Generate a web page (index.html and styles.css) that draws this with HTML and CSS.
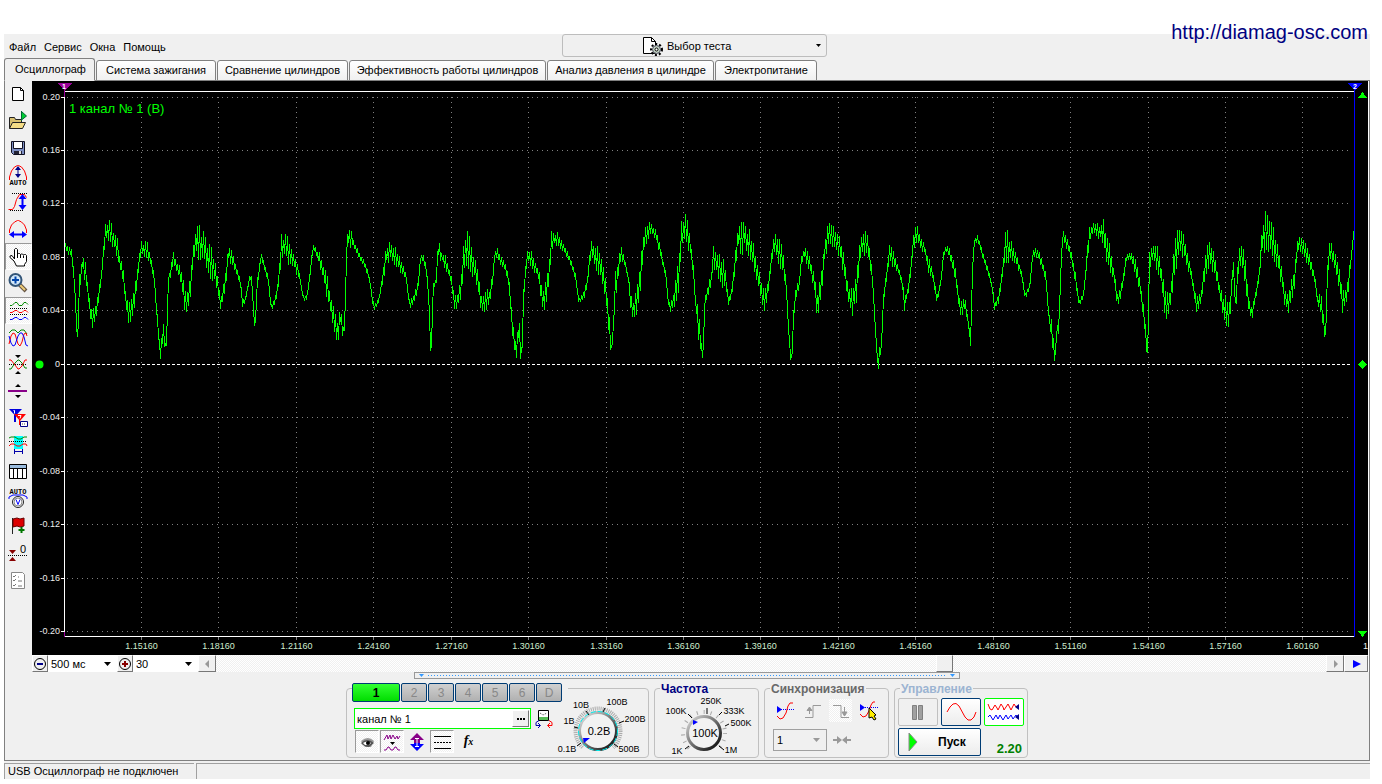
FILE: index.html
```html
<!DOCTYPE html>
<html lang="ru">
<head>
<meta charset="utf-8">
<title>USB Осциллограф</title>
<link rel="stylesheet" href="styles.css">
</head>
<body>
<a class="site" href="http://diamag-osc.com">http://diamag-osc.com</a>
<div class="window">
  <header class="topbar">
    <nav class="menu">
      <button>Файл</button><button>Сервис</button><button>Окна</button><button>Помощь</button>
    </nav>
    <button class="test-picker">
      <svg class="picker-icon" viewBox="0 0 20 20"><path d="M.5 1.500h8l4 4v12h-12z" fill="#fff" stroke="#000"/><path d="M8.500 1.500v4h4" fill="none" stroke="#000"/><circle cx="13.500" cy="13.500" r="5.500" fill="none" stroke="#000" stroke-width="2" stroke-dasharray="2 2"/><circle cx="13.500" cy="13.500" r="4" fill="#c4d4c4" stroke="#445" /><circle cx="13.500" cy="13.500" r="1.500" fill="#fff" stroke="#000"/></svg>
      <span>Выбор теста</span>
      <svg class="caret" viewBox="0 0 5 3"><path d="M0 0h5L2.500 3z"/></svg>
    </button>
  </header>
  <div class="tabs" role="tablist">
    <button class="tab active" role="tab">Осциллограф</button>
    <button class="tab" role="tab">Система зажигания</button>
    <button class="tab" role="tab">Сравнение цилиндров</button>
    <button class="tab" role="tab">Эффективность работы цилиндров</button>
    <button class="tab" role="tab">Анализ давления в цилиндре</button>
    <button class="tab" role="tab">Электропитание</button>
  </div>
  <main class="main">
    <div class="work">
      <div class="toolbar">
        <button class="tool" aria-label="Новый"><svg viewBox="0 0 21 21"><path d="M4.500 3.500h8l3 3v10h-11z" fill="#fff" stroke="#000"/><path d="M12.500 3.500v3h3" fill="none" stroke="#000"/></svg></button>
        <button class="tool" aria-label="Открыть"><svg viewBox="0 0 21 21"><path d="M1.500 17.500v-11h5l1 2h6v3" fill="#d8c070" stroke="#222"/><path d="M1.500 17.500l3-6h13l-3 6z" fill="#f4dc86" stroke="#222"/><path d="M13.500 0v10M13.500 .5l5 4.500-5 4z" fill="#0c3" stroke="#063"/></svg></button>
        <button class="tool" aria-label="Сохранить"><svg viewBox="0 0 21 21"><path d="M3.500 3.500h13v13h-11l-2-2z" fill="#7d8fc4" stroke="#112"/><path d="M5.500 3.500h9v7h-9z" fill="#fff" stroke="#112"/><path d="M6 13h8v3H6z" fill="#223"/><path d="M11 13h2v3h-2z" fill="#ddd"/></svg></button>
        <button class="tool" aria-label="Авто амплитуда"><svg viewBox="0 0 21 21"><path d="M1.500 15v-3l2-6 3-4 3-1.500h1l3 1.500 3 4 2 6v3" fill="none" stroke="#f00"/><path d="M10 4v6" stroke="#008" stroke-width="1"/><path d="M10 1l3 4H7zM10 13l3-4H7z" fill="#008"/><text class="micro" x="10" y="20">AUTO</text></svg></button>
        <button class="tool" aria-label="Размах"><svg viewBox="0 0 21 21"><path d="M4 1.500h15M2 18.500h13" stroke="#000" stroke-dasharray="1 1"/><path d="M.5 17.500h4l2-3 2-7 3-5h5l2 3" fill="none" stroke="#f00"/><path d="M14.500 5v10" stroke="#00f" stroke-width="2"/><path d="M14.500 2l4 5h-8zM14.500 18l4-5h-8z" fill="#00f"/></svg></button>
        <button class="tool" aria-label="Период"><svg viewBox="0 0 21 21"><path d="M1.500 14v-3l2-5 3-3 3-1.500h1l3 1.500 3 3 2 5v3" fill="none" stroke="#f00"/><path d="M5 15.500h10" stroke="#00f" stroke-width="2"/><path d="M1 15.500l5-3.500v7zM19 15.500l-5-3.500v7z" fill="#00f"/></svg></button>
        <button class="tool pressed" aria-label="Рука"><svg viewBox="0 0 21 21"><path d="M6.500 13V3.500l1-1h1l1 1v5l1-1h1l1 1 1-.5h1l1 1 1-.5h1l1 1v6l-2 3v1.500h-8L6 15l-4-3.500V10l2-.5z" fill="#fff" stroke="#000"/><path d="M9.500 8v4M12.500 8.500V12M15.500 9.500V12" stroke="#000"/></svg></button>
        <button class="tool" aria-label="Масштаб"><svg viewBox="0 0 21 21"><path d="M11 11l7 7" stroke="#654" stroke-width="4"/><path d="M12 12l5 5" stroke="#ec7" stroke-width="2"/><circle cx="7.500" cy="7" r="6" fill="#d2e8fa" stroke="#357" stroke-width="2"/><path d="M7.500 3.500v7M4 7h7" stroke="#04a" stroke-width="2"/></svg></button>
        <button class="tool pressed" aria-label="Раздельно"><svg viewBox="0 0 21 21"><path d="M2 5.500h2l3-3h2l2 3h3l2-3h2l2 2" fill="none" stroke="#080"/><path d="M2 8.500h18M2 14.500h18" stroke="#000" stroke-dasharray="1 1"/><path d="M2 12.500h2l3-2h2l2 2h3l2-2h2l2 2" fill="none" stroke="#f00"/><path d="M2 19.500h2l3-2h2l2 2h3l2-2h2l2 2" fill="none" stroke="#00f"/></svg></button>
        <button class="tool" aria-label="Наложение"><svg viewBox="0 0 21 21"><path d="M1 6l3-3h3l3 3 3-3h3l3 4" fill="none" stroke="#080"/><path d="M1 17l2-8 2-3 2 1 3 10 2 2 2-4 2-8 2-1 1 3" fill="none" stroke="#f00"/><path d="M1 9l2 7 2 3 2-1 3-9 2-3h2l2 4 2 8 2 1" fill="none" stroke="#00f"/></svg></button>
        <button class="tool" aria-label="Совмещение"><svg viewBox="0 0 21 21"><path d="M1 10.500h18" stroke="#000" stroke-dasharray="1 1"/><path d="M1 15h2l4-6 3-3h1l3 3 3 5h2" fill="none" stroke="#080"/><path d="M1 6h2l4 5 3 4h1l3-3 3-6h2" fill="none" stroke="#f00"/><path d="M7 1h6l-3 3zM7 20h6l-3-3z"/></svg></button>
        <button class="tool" aria-label="Линия"><svg viewBox="0 0 21 21"><path d="M0 9h19v2H0z" fill="#808"/><path d="M7 6h6l-3-3zM7 14h6l-3 3z"/></svg></button>
        <button class="tool" aria-label="Маркеры"><svg viewBox="0 0 21 21"><path d="M1 1h13L7.500 8z" fill="#00d"/><path d="M7 7v7" stroke="#00d" stroke-width="2"/><path d="M5.500 2.500h1v3" fill="none" stroke="#fff"/><path d="M6 6h12l-6 7z" fill="#f00"/><path d="M11.500 11v6" stroke="#f00"/><path d="M10 7.500h3l-1 3" fill="none" stroke="#fff"/><path d="M12.500 13.500h7v5h-7z" fill="#fff" stroke="#008"/><path d="M14 16h4" stroke="#555" stroke-dasharray="1 1"/></svg></button>
        <button class="tool" aria-label="Диапазон"><svg viewBox="0 0 21 21"><path d="M6 1h9v13H6z" fill="#0ff"/><path d="M1 3l2-1h4l3 2h3l3-2h3" fill="none" stroke="#080"/><path d="M1 6.500h18" stroke="#000" stroke-dasharray="1 1"/><path d="M1 11l2-2h3l3 2h3l3-2h3l1 2" fill="none" stroke="#f00"/><path d="M6.500 14v5M14.500 14v5M7 16.500h7" stroke="#00a"/></svg></button>
        <button class="tool" aria-label="Таблица"><svg viewBox="0 0 21 21"><path d="M1.500 2.500h17v14h-17z" fill="#fff" stroke="#000"/><path d="M2 3h16v3H2z" fill="#9bd"/><path d="M1.500 6.500h17M5.500 6.500v10M9.500 6.500v10M14.500 6.500v10" stroke="#000"/></svg></button>
        <button class="tool" aria-label="Авто измерение"><svg viewBox="0 0 21 21"><text class="micro" x="10" y="5">AUTO</text><path d="M1 10V8l4-2h10l4 2v2" fill="none" stroke="#00f"/><circle cx="10" cy="13" r="5.500" fill="#fff" stroke="#222"/><circle cx="10" cy="13" r="4" fill="none" stroke="#888"/><path d="M8 10.500l2 5 2-5" fill="none" stroke="#00f"/></svg></button>
        <button class="tool" aria-label="Метка"><svg viewBox="0 0 21 21"><path d="M4.500 2v16" stroke="#222"/><path d="M5 3l4-1 3 1 4-1v8l-4 1-3-1-4 1z" fill="#d00" stroke="#600"/><path d="M13.500 11v6M10.500 14h6" stroke="#070" stroke-width="2"/></svg></button>
        <button class="tool" aria-label="Ноль"><svg viewBox="0 0 21 21"><path d="M0 12.500h19" stroke="#000" stroke-dasharray="1 1"/><path d="M1 7h7l-3.500 4zM1 18h7l-3.500-4z" fill="#800"/><text class="zero" x="15" y="10">0</text></svg></button>
        <button class="tool" aria-label="Список"><svg viewBox="0 0 21 21"><path d="M3.500 2.500h11l2 2v14h-13z" fill="#fff" stroke="#888"/><path d="M5 6l1 1 2-2M5 10l1 1 2-2M5 15l1 1 2-2M10 7h1M10 11h4M10 16h4" fill="none" stroke="#777"/></svg></button>
      </div>
      <div class="scope">
        <svg class="chart" viewBox="0 0 1336 574" role="img" aria-label="Осциллограмма">
          <g id="grid"></g>
          <path id="wave" class="wave"/>
          <g id="labels"></g>
          <path class="frame" d="M32.500 10v546M32 10.500h1290M32 555.500h1290"/>
          <path class="cursor-b" d="M1322 2h1v554h-1z"/>
          <path d="M25 2h15l-7 7v7h-1V9z" fill="#909"/><path d="M32 551h1v5h-1z" fill="#909"/>
          <text class="mark" x="32" y="8">1</text>
          <path d="M1315 2h15l-7 7h-1z" fill="#00f"/><text class="mark" x="1323" y="8">2</text>
          <circle class="zero-dot" cx="7.500" cy="283.500" r="4"/>
          <path d="M1326 17h9l-4.500-6zM1326 550h9l-4.500 6zM1326 283.500l4.500-4.500 4.500 4.500-4.500 4.500z" fill="#0f0"/>
          <text class="channel-name" x="37" y="32">1 канал № 1 (B)</text>
        </svg>
        <div class="scrollrow">
          <button class="bevel sq" aria-label="Меньше"><svg viewBox="0 0 14 14"><circle cx="7" cy="7" r="5.500" fill="none" stroke="#000"/><path d="M4 7h6" stroke="#008" stroke-width="2"/></svg></button>
          <label class="pick time"><select aria-label="Развёртка"><option>500 мс</option></select><svg class="drop" viewBox="0 0 7 4"><path d="M0 0h7L3.500 4z"/></svg></label>
          <button class="bevel sq" aria-label="Больше"><svg viewBox="0 0 14 14"><circle cx="7" cy="7" r="5.500" fill="none" stroke="#000"/><path d="M4 7h6M7 4v6" stroke="#800" stroke-width="2"/></svg></button>
          <label class="pick count"><select aria-label="Количество"><option>30</option></select><svg class="drop" viewBox="0 0 7 4"><path d="M0 0h7L3.500 4z"/></svg></label>
          <button class="bevel arrow" aria-label="Назад"><svg viewBox="0 0 14 14"><path d="M9 3v8L5 7z" fill="#999"/></svg></button>
          <div class="track"><button class="bevel thumb" aria-label="Прокрутка"></button></div>
          <button class="bevel arrow" aria-label="Вперёд"><svg viewBox="0 0 14 14"><path d="M6 3v8l4-4z" fill="#999"/></svg></button>
          <button class="bevel play" aria-label="Воспроизвести"><svg viewBox="0 0 14 14"><path d="M4 3v8l8-4z" fill="#00f"/></svg></button>
        </div>
      </div>
    </div>
    <div class="splitter"><svg viewBox="0 0 5 3"><path d="M0 0h5L2.500 3z" fill="#39f"/></svg><span></span><svg viewBox="0 0 5 3"><path d="M0 0h5L2.500 3z" fill="#39f"/></svg></div>
    <div class="panels">
      <fieldset class="group channel">
        <legend class="channels"><button class="ch on">1</button><button class="ch">2</button><button class="ch">3</button><button class="ch">4</button><button class="ch">5</button><button class="ch">6</button><button class="ch">D</button></legend>
        <div class="channel-body">
          <div class="channel-left">
            <div class="name-row">
              <div class="name-box"><input aria-label="Имя канала" value="канал № 1"><button class="bevel dots" aria-label="Ещё"><svg viewBox="0 0 8 2"><path d="M0 0h2v2H0zM3 0h2v2H3zM6 0h2v2H6z"/></svg></button></div>
              <button class="flat" aria-label="Датчик"><svg width="18" height="20" viewBox="0 0 18 20"><path d="M3.500 1.500h10v10h-10z" fill="#fff" stroke="#000"/><path d="M4 8h9v3H4z" fill="#5b5"/><path d="M5 4l3 2 4-2" fill="none" stroke="#444" stroke-dasharray="1 1"/><path d="M4 11.500l-3 2v3h4M3 14l2.500 2.500L3 19" fill="none" stroke="#00a"/><path d="M14 11.500l3 2v3h-4M15 14l-2.500 2.500L15 19" fill="none" stroke="#f00"/></svg></button>
            </div>
            <div class="mode-row">
              <button class="mode pressed" aria-label="Показать"><svg viewBox="0 0 20 20"><path d="M4 9q7-6 13 0l-3 6H8z" fill="#999"/><path d="M4 11q6-6 13 0l-5 4q-5 0-8-4z" fill="#555"/><path d="M6 11q4-3 8 0l-2 2H8z" fill="#fff"/><circle cx="11" cy="11" r="2" fill="#000"/></svg></button>
              <button class="mode pressed" aria-label="Фильтр"><svg viewBox="0 0 20 20"><path d="M2 8l3-5 1 4 2-4 1 4 2-4 2 4 2-3 1 3 2-3" fill="none" stroke="#808"/><path d="M8 10h5l-2.500 3z"/><path d="M2 18h2l2-3h1l2 3h2l2-3h1l2 3h2" fill="none" stroke="#808"/></svg></button>
              <button class="mode" aria-label="Инверсия"><svg viewBox="0 0 20 20"><path d="M10 1l7 7h-4v3H7V8H3z" fill="#808"/><path d="M10 19l7-7h-4v-1H7v1H3z" fill="#00f"/><path d="M10 6v8M8 6.500h4M8 14.500h4" stroke="#fff"/></svg></button>
              <button class="mode pressed" aria-label="Линии"><svg viewBox="0 0 20 20"><path d="M2 4.500h17M2 16.500h17" stroke="#000"/><path d="M2 10.500h17" stroke="#000" stroke-dasharray="2 1"/></svg></button>
              <button class="mode fx" aria-label="Функция">f<small>x</small></button>
            </div>
          </div>
          <svg class="dial dial-v" viewBox="0 0 94 66" role="img" aria-label="0.2B">
            <circle cx="44" cy="42" r="22.500" fill="none" stroke="#aaa" stroke-width="4" stroke-dasharray="1 1"/>
            <path d="M44 42l22 24H22z" fill="#f0f0f0"/>
            <circle cx="44" cy="42" r="18.500" fill="#f2f2f2" stroke="url(#rim)" stroke-width="3"/>
            <circle cx="44" cy="42" r="19.500" fill="none" stroke="#0ee" stroke-dasharray="5 2"/>
            <path d="M32 22l3 4M51 19l-2 4M20 38l4 1M65 34l5-2M23 57l4-3M60 55l4 3" stroke="#000"/>
            <path d="M29 49h7l-6 5z" fill="#00f"/>
            <text x="27" y="19">10B</text><text x="63" y="16">100B</text><text x="15" y="35">1B</text><text x="81" y="33">200B</text><text x="13" y="63">0.1B</text><text x="75" y="63">500B</text>
            <text class="val" x="45" y="46">0.2B</text>
            <defs><linearGradient id="rim" x1="0" y1="0" x2="1" y2="1"><stop offset="0" stop-color="#eee"/><stop offset="1" stop-color="#000"/></linearGradient></defs>
          </svg>
        </div>
      </fieldset>
      <fieldset class="group freq">
        <legend>Частота</legend>
        <svg class="dial dial-f" viewBox="0 0 103 64" role="img" aria-label="100K">
          <circle cx="49" cy="40" r="21" fill="none" stroke="#aaa" stroke-width="4" stroke-dasharray="1 6"/>
          <path d="M49 40l20 24H29z" fill="#f0f0f0"/>
          <circle cx="49" cy="40" r="16.500" fill="#f2f2f2" stroke="url(#rim2)" stroke-width="3"/>
          <path d="M52 15v6M33 21l4 4M64 22l3-3M70 33l4-2M30 56l4-3M64 53l5 4" stroke="#000"/>
          <path d="M38 27l5 2-5 3z" fill="#00f"/>
          <text x="56" y="11">250K</text><text x="21" y="21">100K</text><text x="79" y="21">333K</text><text x="86" y="33">500K</text><text x="22" y="61">1K</text><text x="76" y="60">1M</text>
          <text class="val" x="50" y="44">100K</text>
          <defs><linearGradient id="rim2" x1="0" y1="0" x2="1" y2="1"><stop offset="0" stop-color="#ddd"/><stop offset="1" stop-color="#000"/></linearGradient></defs>
        </svg>
      </fieldset>
      <fieldset class="group sync">
        <legend>Синхронизация</legend>
        <div class="sync-icons">
          <button class="syn" aria-label="Уровень"><svg viewBox="0 0 20 20"><path d="M4 8.500h15" stroke="#00f" stroke-dasharray="1 1"/><path d="M2 5v7l5-3.500z" fill="#00f"/><path d="M2 15l3 3 3-1 3-5 2-7 2-3h3" fill="none" stroke="#f00"/></svg></button>
          <button class="syn" aria-label="Фронт"><svg viewBox="0 0 20 20"><path d="M2 16.500h8v-12h8" fill="none" stroke="#999"/><path d="M6.500 7v6M4 9.500L6.500 6 9 9.500z" fill="#999" stroke="#999"/></svg></button>
          <button class="syn lit" aria-label="Спад"><svg viewBox="0 0 20 20"><path d="M2 4.500h8v12h8" fill="none" stroke="#999"/><path d="M13.500 6v6M11 11l2.500 4 2.500-4z" fill="#999" stroke="#999"/></svg></button>
          <button class="syn" aria-label="Выбор уровня"><svg viewBox="0 0 20 20"><path d="M4 6.500h15" stroke="#00f" stroke-dasharray="1 1"/><path d="M1 3v7l5-3.500z" fill="#00f"/><path d="M1 13l3 3 3-1 3-5 2-6 2-3h2" fill="none" stroke="#f00"/><path d="M10 7l7 7-2 1 2 3-2 1-2-3-3 1z" fill="#fe0" stroke="#000"/></svg></button>
        </div>
        <div class="sync-row">
          <label class="pick level"><select aria-label="Канал синхронизации"><option>1</option></select><svg class="drop" viewBox="0 0 7 4"><path d="M0 0h7L3.500 4z" fill="#999"/></svg></label>
          <button class="flat" aria-label="Сжать"><svg width="18" height="12" viewBox="0 0 18 12"><path d="M0 5h4V2l5 4-5 4V7H0zM18 5h-4V2L9 6l5 4V7h4z" fill="#999"/></svg></button>
        </div>
      </fieldset>
      <fieldset class="group control">
        <legend>Управление</legend>
        <div class="control-grid">
          <button class="xp off" aria-label="Пауза"><svg viewBox="0 0 38 26"><path d="M13.500 6.500h4v14h-4zM19.500 6.500h4v14h-4z" fill="#a0a0a0" stroke="#808080"/></svg></button>
          <button class="xp" aria-label="Осциллограмма"><svg viewBox="0 0 38 26"><path d="M5 13l3-5 3-3 3-.5 3 2.500 6 11 3 3h3l3-3 2-5" fill="none" stroke="#f00"/></svg></button>
          <button class="xp sel" aria-label="Самописец"><svg viewBox="0 0 38 26"><path d="M3 5l2 5 2 1 3-5 2 3 1 2 3-6 2 3 1 3 4-6 2 4 1 2 3-6 2 3" fill="none" stroke="#f00"/><path d="M3 18l2-2 3 5 3-5 2 4 2-4 3 5 3-5 2 4 3-4 2 4 3-4 2 3" fill="none" stroke="#00f"/><path d="M34 5v6l-4-3zM34 15v6l-4-3z" fill="#008"/></svg></button>
          <button class="xp start"><svg viewBox="0 0 10 20"><path d="M1 1v18l8-9z" fill="#0f0" stroke="#888"/></svg><span>Пуск</span></button>
          <span class="version">2.20</span>
        </div>
      </fieldset>
    </div>
  </main>
  <footer class="status"><span>USB Осциллограф не подключен</span><span></span></footer>
</div>
<script src="app.js"></script>
</body>
</html>
```
FILE: styles.css
```css
* { box-sizing: border-box; }
body {
  margin: 0;
  padding: 34px 12px 5px 4px;
  background: #fff;
  color: #000;
  font: 12px/14px "Liberation Sans", sans-serif;
  position: relative;
}
button, input, select { font: inherit; color: inherit; margin: 0; padding: 0; border: 0; background: none; }
svg { display: block; flex: none; }
.site {
  position: absolute;
  top: 20px;
  right: 14px;
  font-size: 20px;
  line-height: 24px;
  color: #000080;
  text-decoration: none;
}
.window { background: #f0f0f0; }
.topbar { display: grid; grid-template-columns: 558fr 265px 543fr; height: 24px; }
.menu { display: flex; gap: 8px; padding: 2px 0 0 5px; align-items: center; }
.menu, .status { font: 11px/14px "Liberation Sans", sans-serif; }
.test-picker {
  display: flex;
  align-items: center;
  gap: 4px;
  height: 23px;
  padding: 0 5px 0 80px;
  border: 1px solid #bdbdbd;
  border-radius: 3px;
  font-size: 11px;
}
.picker-icon { width: 20px; height: 20px; }
.caret { width: 5px; height: 3px; margin-left: auto; }
.tabs {
  display: grid;
  grid-template-columns: 91px 120px 131px 197px 167px 102px;
  column-gap: 1px;
  height: 23px;
  margin-bottom: -1px;
  align-items: end;
  position: relative;
}
.tab {
  height: 21px;
  padding-bottom: 2px;
  border: 1px solid #808080;
  border-radius: 3px 3px 0 0;
  background: linear-gradient(#fff, #f0f0f0);
  white-space: nowrap;
  font-size: 11px;
}
.tab.active { height: 23px; background: #f0f0f0; border-bottom-color: #f0f0f0; padding-left: 2px; }
.main { border: 1px solid #808080; padding-bottom: 2px; }
.work { display: grid; grid-template-columns: 27px minmax(0, 1fr); }
.toolbar { display: flex; flex-direction: column; }
.tool { display: grid; place-items: center; height: 27px; border: 1px solid transparent; }
.tool svg { width: 21px; height: 21px; }
.pressed {
  border: 1px solid #fff;
  border-top-color: #999;
  border-left-color: #999;
  background: repeating-conic-gradient(#fff 0 25%, #f0f0f0 0 50%) 0 0 / 2px 2px;
}
.micro { font: bold 7px "Liberation Mono", monospace; text-anchor: middle; }
.zero { font: 11px "Liberation Sans", sans-serif; text-anchor: middle; }

.scope { border-right: 1px solid #fff; }
.chart { width: 100%; background: #000; }
.chart, .chart path { shape-rendering: crispEdges; }
.frame { stroke: #fff; fill: none; }
.cursor-b { fill: #00f; }
.zero-dot { fill: #0f0; shape-rendering: geometricPrecision; }
.wave { stroke: #0f0; fill: none; stroke-width: 1; }
.grid-line { stroke: #808080; stroke-dasharray: 1 4; }
.zero-line { stroke: #fff; stroke-dasharray: 3 2; }
.tick { stroke: #fff; }
.x-tick { stroke: #808080; }
.y-label, .x-label { font: 9px "Liberation Sans", sans-serif; fill: #eee; text-anchor: end; }
.x-label { fill: #cfeccf; text-anchor: middle; }
.mark { font: bold 7px "Liberation Sans", sans-serif; fill: #fff; text-anchor: middle; }
.channel-name { font: 13px "Liberation Sans", sans-serif; fill: #0f0; }

.scrollrow { display: flex; height: 17px; }
.bevel {
  display: grid;
  place-items: center;
  background: #f0f0f0;
  border: 1px solid #fff;
  border-right-color: #777;
  border-bottom-color: #777;
}
.bevel svg { width: 14px; height: 14px; }
.sq { width: 16px; }
.arrow { width: 18px; }
.play { width: 24px; }
.pick { display: grid; align-items: center; background: #fff; }
.pick select { grid-area: 1 / 1; width: 100%; appearance: none; padding-left: 3px; font-size: 11px; outline: 0; }
.pick .drop { grid-area: 1 / 1; justify-self: end; width: 7px; height: 4px; margin-right: 6px; pointer-events: none; }
.time { width: 69px; }
.count { width: 65px; }
.track {
  flex: 1;
  display: grid;
  grid-template-columns: 721fr 17px 373fr;
  background: repeating-conic-gradient(#fff 0 25%, #f0f0f0 0 50%) 0 0 / 2px 2px;
}
.thumb { grid-column: 2; }

.splitter {
  display: flex;
  align-items: center;
  gap: 4px;
  width: 40%;
  height: 7px;
  margin: 0 auto;
  padding: 0 4px;
  border: 1px solid #999;
}
.splitter svg { width: 5px; height: 3px; }
.splitter span { flex: 1; height: 1px; background: repeating-linear-gradient(90deg, #39f 0 1px, transparent 1px 3px); }

.panels { display: flex; justify-content: center; gap: 5px; padding-top: 4px; }
.group { margin: 0; padding: 0; min-width: 0; height: 75px; border: 1px solid #c0c0c0; border-radius: 4px; }
.group legend { height: 10px; line-height: 12px; margin-left: 5px; padding: 0 1px; font-weight: bold; }
.channel { width: 303px; }
.freq { width: 105px; }
.freq legend { color: #000080; }
.sync { width: 125px; }
.sync legend { color: #696969; }
.control { width: 134px; }
.control legend { color: #9cb4d2; }
.group .channels { display: flex; gap: 1px; padding: 0 6px 0 0; font-weight: normal; }
.ch {
  width: 26px;
  height: 19px;
  border: 1px solid #003c74;
  border-radius: 2px;
  background: linear-gradient(#d0d0d0, #b0b0b0);
  color: #888;
}
.ch.on { width: 48px; background: linear-gradient(#3f3, #0d0); color: #000; font-weight: bold; }
.channel-body { display: flex; justify-content: space-between; }
.channel-left { padding: 15px 0 0 7px; }
.name-row { display: flex; gap: 4px; }
.name-box { display: flex; width: 177px; height: 21px; border: 1px solid #0f0; background: #fff; padding: 1px; }
.name-box input { flex: 1; min-width: 0; padding-left: 1px; font-size: 11px; }
.dots { width: 17px; }
.dots svg { width: 8px; height: 2px; }
.flat { display: grid; place-items: center; }
.mode-row { display: flex; gap: 1px; padding: 1px 0 0 1px; }
.mode { display: grid; place-items: center; width: 24px; height: 23px; }
.mode svg { width: 20px; height: 20px; }
.mode.fx { display: block; padding-left: 3px; font: italic bold 14px/22px "Liberation Serif", serif; }
.fx small { font-size: 10px; }
.dial text { font: 9px "Liberation Sans", sans-serif; text-anchor: middle; }
.dial .val { font-size: 11px; }
.dial-v { width: 94px; height: 66px; margin-top: -4px; }
.dial-f { width: 103px; height: 64px; }
.sync-icons { display: flex; gap: 5px; padding: 6px 0 0 8px; }
.syn { display: grid; place-items: center; width: 23px; height: 23px; }
.syn svg { width: 20px; height: 20px; }
.lit { background: repeating-conic-gradient(#fff 0 25%, #f0f0f0 0 50%) 0 0 / 2px 2px; }
.sync-row { display: flex; gap: 6px; padding: 7px 0 0 8px; }
.level { width: 54px; height: 22px; border: 1px solid #a0a0a0; background: #f0f0f0; }
.control-grid { display: grid; grid-template-columns: 40px 40px 40px; gap: 2px 3px; padding: 5px 0 0 3px; }
.xp {
  display: flex;
  align-items: center;
  height: 28px;
  border: 1px solid #003c74;
  border-radius: 2px;
  background: linear-gradient(#fff, #ececec);
}
.xp svg { width: 38px; height: 26px; }
.xp.off { border-color: #c0c0c0; background: #f0f0f0; }
.xp.sel { border-color: #0f0; background: #fff; }
.xp.start { grid-column: span 2; gap: 20px; padding-left: 9px; font-weight: bold; font-size: 12px; }
.xp.start svg { width: 10px; height: 20px; }
.version { justify-self: end; align-self: end; padding-right: 2px; font: bold 13px/14px "Liberation Sans", sans-serif; color: #008000; }

.status { display: grid; grid-template-columns: 190px 1fr; gap: 2px; padding-top: 2px; }
.status span { height: 16px; padding-left: 3px; border-top: 1px solid #a0a0a0; border-left: 1px solid #a0a0a0; white-space: nowrap; }
```
FILE: app.js
```js
const NS = 'http://www.w3.org/2000/svg';
const add = (parent, tag, attrs, text) => {
  const el = document.createElementNS(NS, tag);
  for (const key in attrs) el.setAttribute(key, attrs[key]);
  if (text) el.textContent = text;
  parent.appendChild(el);
};
const grid = document.getElementById('grid');
const labels = document.getElementById('labels');

for (let i = 0; i <= 10; i++) {
  const y = Math.floor(16 + i * 53.45) + 0.5;
  const value = (20 - i * 4) / 100;
  add(grid, 'path', { class: i === 5 ? 'zero-line' : 'grid-line', d: `M35 ${y}H1320` });
  add(grid, 'path', { class: 'tick', d: `M29 ${y}h3` });
  add(labels, 'text', { class: 'y-label', x: 28, y: y + 2.5 }, value === 0 ? '0' : value.toFixed(2));
}
for (let i = 0; i < 16; i++) {
  const x = Math.round(109 + i * 77.43) + 0.5;
  add(grid, 'path', { class: 'grid-line', d: `M${x} 16V551` });
  add(grid, 'path', { class: 'x-tick', d: `M${x} 556v3` });
  add(labels, 'text', { class: 'x-label', x: x, y: 568 }, (1.1516 + i * 0.03).toFixed(5));
}
add(labels, 'text', { class: 'y-label', x: 1336, y: 568 }, '1');

/* Signal samples: time, level, ripple (thirds of a grid unit), three sweeps. */
const sweeps = [
`0,140,10 12,150,15 22,160,10 30,250,15 40,440,15 44,260,30 54,180,20 64,225,35 72,290,15 80,350,25 88,355,28 96,325,20 104,280,30 112,215,10 121,110,30 128,95,28 139,90,45 148,115,25 156,135,35 166,185,20 175,215,35 184,300,20 193,335,35 202,325,30 210,295,35 220,215,15 229,140,30 238,150,15 247,155,35 262,190,15 270,240,12 277,340,20 284,430,25 287,470,12 296,390,25 305,460,15 308,370,5 311,240,10 318,215,20 326,170,20 340,205,15 350,235,30 362,310,35 368,320,35 378,265,30 386,160,35 396,130,42 402,125,55 415,145,50 425,155,40 440,190,45 455,225,30 465,290,25 470,310,20 478,270,25 487,210,25 491,155,30 500,170,20 515,205,10 528,250,10 533,305,20 540,305,8 550,265,8 556,225,5 562,240,10 566,310,10 572,400,12 577,260,20 582,230,8 589,165,12 600,200,6 612,240,8 620,325,8 630,310,10 640,265,35 650,150,40 660,140,35 668,140,45 680,170,25 694,195,25 706,235,6 718,300,10 728,290,10 736,225,10 744,150,20 752,145,12 765,180,20 780,230,15 787,255,45 796,300,25 805,345,35 812,370,35 820,405,28 828,345,25 834,380,25 839,420,15 843,280,5 848,115,8 858,110,28 870,135,10 885,170,10 900,190,10 915,235,6 928,325,12 944,300,5 958,210,30 966,165,25 980,150,30 992,165,30 1008,195,20 1025,230,8 1035,315,20 1045,305,15 1060,260,15 1068,175,8 1075,170,12 1085,200,15 1093,290,20 1098,430,20 1102,460,10 1105,260,6 1116,240,10 1120,145,28 1130,165,15 1145,190,20 1160,235,15 1168,300,30 1176,310,30 1190,270,30 1198,160,45 1210,150,50 1225,190,40 1240,235,30 1250,310,35 1266,305,40 1278,285,25 1288,200,15`,
`0,165,12 10,160,15 20,180,15 35,205,18 45,260,10 52,360,40 60,430,30 66,460,12 72,380,40 78,440,35 83,480,12 87,280,10 92,230,35 98,160,12 110,175,25 125,210,15 135,230,25 140,285,30 148,305,25 158,270,50 165,200,30 172,120,40 180,115,15 192,120,25 205,140,12 225,175,12 243,230,10 253,305,8 262,295,8 272,280,20 280,235,15 290,145,32 300,165,35 308,175,45 320,205,25 328,230,45 336,290,25 345,380,40 352,460,15 358,350,10 362,260,40 370,225,30 379,150,25 390,185,10 402,235,10 410,320,35 420,325,25 428,300,40 440,210,55 448,115,28 460,95,25 470,85,15 485,105,20 500,165,15 515,230,10 520,300,10 527,325,15 538,300,20 548,260,50 556,190,40 560,110,50 570,95,40 578,95,60 586,125,30 597,210,20 603,310,15 612,370,45 620,430,20 626,480,15 630,310,20 640,275,15 650,235,20 658,165,40 668,190,35 680,210,45 692,230,30 702,310,10 714,265,8 722,190,35 730,110,35 740,105,55 750,105,40 765,135,45 780,180,45 790,215,30 800,270,25 810,310,35 822,255,30 830,190,25 838,130,30 850,145,42 868,195,40 876,270,15 884,420,15 892,495,20 898,330,25 905,280,20 915,250,10 920,180,10 930,155,20 945,190,25 958,240,25 968,310,40 980,260,35 990,165,25 1002,105,50 1020,110,40 1035,140,30 1050,205,40 1065,300,35 1074,310,35 1086,260,50 1097,145,40 1110,125,45 1125,160,30 1135,250,15 1145,420,15 1150,500,25 1156,460,35 1161,430,15 1168,280,20 1178,215,15 1186,155,25 1200,185,25 1216,220,10 1225,260,12 1230,310,20 1240,275,12 1250,200,15 1256,130,20 1266,105,45 1275,120,20 1288,150,25`,
`0,150,10 10,185,30 25,225,10 38,300,12 50,240,10 58,155,12 70,145,15 82,180,12 92,220,25 104,310,20 110,330,30 122,305,15 130,360,20 139,430,12 143,230,5 149,125,10 160,115,12 170,150,8 190,210,8 205,270,10 210,320,10 225,285,20 235,210,12 242,145,40 248,140,45 260,150,35 275,175,20 292,225,10 302,290,6 315,265,10 325,160,12 338,155,15 350,185,15 365,235,15 372,340,10 382,400,35 392,480,12 396,400,15 404,370,30 408,250,5 413,115,20 420,110,20 435,150,15 450,215,20 465,315,10 478,280,10 488,170,20 495,110,30 505,90,15 518,85,25 530,100,20 540,110,50 555,175,40 570,230,15 578,310,30 590,275,20 606,170,10 620,170,12 635,205,25 648,270,20 657,340,25 665,420,30 670,485,10 674,180,45 682,155,25 690,160,45 705,190,35 718,290,40 728,320,35 740,280,25 750,160,60 764,115,50 780,145,30 800,220,15 815,315,30 830,290,15 845,190,45 855,160,45 870,200,35 885,270,15 895,310,40 910,355,45 918,310,40 926,180,15 934,340,25 940,200,30 948,150,40 962,215,40 972,310,20 982,340,25 990,305,12 1004,235,15 1012,120,35 1025,95,60 1040,100,50 1055,155,40 1070,220,30 1083,305,35 1095,300,35 1110,230,40 1120,130,20 1133,130,25 1150,175,25 1170,230,15 1180,305,10 1188,300,35 1198,370,20 1204,420,15 1208,230,20 1215,150,30 1225,165,25 1240,210,30 1255,310,30 1268,280,35 1280,180,15 1287,100,15 1290,125,10`
];
const samples = sweeps.flatMap((text, s) => text.split(' ').map(item => {
  const [t, level, ripple] = item.split(',').map(Number);
  return [(t + s * 1290) / 3 + 32, level / 3 + 119, ripple / 3];
}));
let seed = 7;
const random = () => (seed = (seed * 16807) % 2147483647) / 2147483647;
let k = 0;
let d = '';
for (let x = 32; x < 1322; x++) {
  while (k < samples.length - 2 && samples[k + 1][0] <= x) k++;
  const [x0, y0, r0] = samples[k];
  const [x1, y1, r1] = samples[k + 1];
  const f = Math.min(1, (x - x0) / (x1 - x0));
  const ripple = (r0 + (r1 - r0) * f) * (0.5 + 0.7 * random()) * (x % 2 ? -1 : 1);
  d += (d ? 'L' : 'M') + (x + 0.5) + ' ' + Math.round(y0 + (y1 - y0) * f + ripple);
}
document.getElementById('wave').setAttribute('d', d);
```
